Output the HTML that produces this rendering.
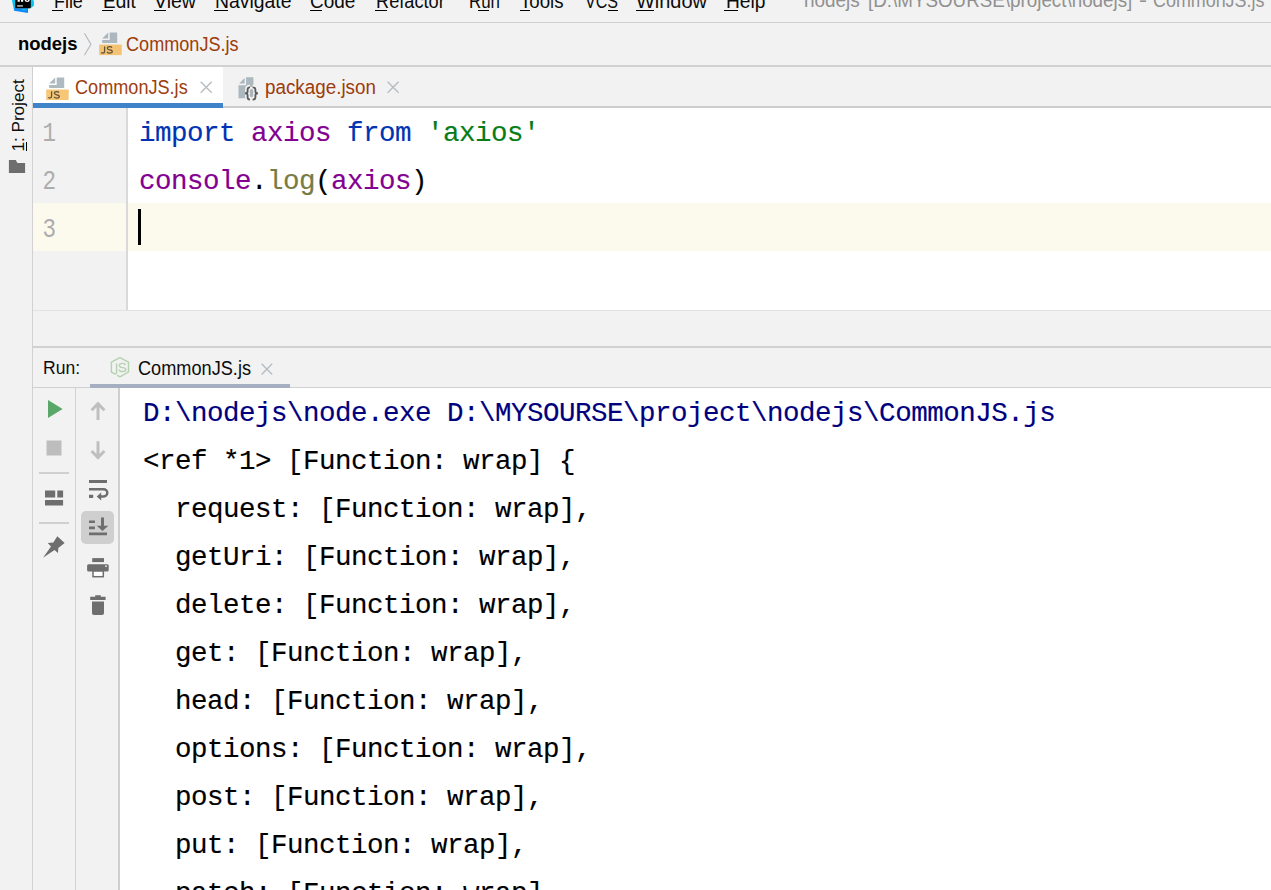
<!DOCTYPE html>
<html><head><meta charset="utf-8"><title>WebStorm</title>
<style>
html,body{margin:0;padding:0;}
body{width:1271px;height:890px;overflow:hidden;background:#f2f2f2;position:relative;font-family:"Liberation Sans",sans-serif;}
.t{position:absolute;white-space:pre;line-height:24px;transform-origin:0 0;opacity:.95;}
.b{position:absolute;}
.m{position:absolute;white-space:pre;font-family:"Liberation Mono",monospace;font-size:27.5px;letter-spacing:-0.5px;line-height:48px;-webkit-text-stroke:0.15px;}
svg{position:absolute;left:0;top:0;overflow:visible;}
</style></head>
<body>
<div class="b" style="left:0px;top:22px;width:1271px;height:1px;background:#d1d1d1;"></div>
<div class="b" style="left:0px;top:65px;width:1271px;height:2px;background:#d1d1d1;"></div>
<div class="b" style="left:32px;top:67px;width:1px;height:823px;background:#d1d1d1;"></div>
<div class="b" style="left:33px;top:67px;width:190px;height:36px;background:#ffffff;"></div>
<div class="b" style="left:33px;top:103px;width:190px;height:5px;background:#4083c9;"></div>
<div class="b" style="left:223px;top:106px;width:1048px;height:2px;background:#cdcdcd;"></div>
<div class="b" style="left:33px;top:108px;width:94px;height:202px;background:#f2f2f2;"></div>
<div class="b" style="left:126px;top:108px;width:2px;height:202px;background:#d9d9d9;"></div>
<div class="b" style="left:128px;top:108px;width:1143px;height:202px;background:#ffffff;"></div>
<div class="b" style="left:33px;top:203px;width:93px;height:48px;background:#fcfaed;"></div>
<div class="b" style="left:128px;top:203px;width:1143px;height:48px;background:#fcfaed;"></div>
<div class="b" style="left:138px;top:209px;width:3px;height:36px;background:#000000;"></div>
<div class="b" style="left:33px;top:310px;width:1238px;height:1px;background:#e2e2e2;"></div>
<div class="b" style="left:33px;top:346px;width:1238px;height:2px;background:#d1d1d1;"></div>
<div class="b" style="left:33px;top:387px;width:1238px;height:1px;background:#d1d1d1;"></div>
<div class="b" style="left:90px;top:384px;width:200px;height:4px;background:#a6afc1;"></div>
<div class="b" style="left:75px;top:388px;width:1px;height:502px;background:#d1d1d1;"></div>
<div class="b" style="left:118px;top:388px;width:2px;height:502px;background:#cfcfcf;"></div>
<div class="b" style="left:120px;top:388px;width:1151px;height:502px;background:#ffffff;"></div>
<div class="b" style="left:39px;top:472px;width:30px;height:2px;background:#d0d0d0;"></div>
<div class="b" style="left:39px;top:522px;width:30px;height:2px;background:#d0d0d0;"></div>
<div class="b" style="left:81px;top:511px;width:33px;height:33px;background:#cfcfcf;border-radius:5px;"></div>
<span class="t" style="left:53.80px;top:-10.86px;font-size:19.5px;color:#000000;transform:scaleX(0.9168);">File</span>
<span class="t" style="left:103.30px;top:-10.86px;font-size:19.5px;color:#000000;transform:scaleX(0.9733);">Edit</span>
<span class="t" style="left:154.00px;top:-10.86px;font-size:19.5px;color:#000000;transform:scaleX(1.0009);">View</span>
<span class="t" style="left:214.50px;top:-10.86px;font-size:19.5px;color:#000000;transform:scaleX(0.9939);">Navigate</span>
<span class="t" style="left:310.00px;top:-10.86px;font-size:19.5px;color:#000000;transform:scaleX(0.9716);">Code</span>
<span class="t" style="left:376.30px;top:-10.86px;font-size:19.5px;color:#000000;transform:scaleX(0.9323);">Refactor</span>
<span class="t" style="left:469.00px;top:-10.86px;font-size:19.5px;color:#000000;transform:scaleX(0.8668);">Run</span>
<span class="t" style="left:519.50px;top:-10.86px;font-size:19.5px;color:#000000;transform:scaleX(0.9558);">Tools</span>
<span class="t" style="left:585.00px;top:-10.86px;font-size:19.5px;color:#000000;transform:scaleX(0.8231);">VCS</span>
<span class="t" style="left:636.00px;top:-10.86px;font-size:19.5px;color:#000000;transform:scaleX(1.0230);">Window</span>
<span class="t" style="left:725.50px;top:-10.86px;font-size:19.5px;color:#000000;transform:scaleX(0.9848);">Help</span>
<div class="b" style="left:52.4px;top:9.5px;width:10.2px;height:1.5px;background:#000000;"></div>
<div class="b" style="left:102.3px;top:9.5px;width:10.3px;height:1.5px;background:#000000;"></div>
<div class="b" style="left:154.2px;top:9.5px;width:12.0px;height:1.5px;background:#000000;"></div>
<div class="b" style="left:213.6px;top:9.5px;width:14.4px;height:1.5px;background:#000000;"></div>
<div class="b" style="left:310.3px;top:9.5px;width:12.0px;height:1.5px;background:#000000;"></div>
<div class="b" style="left:375.4px;top:9.5px;width:12.1px;height:1.5px;background:#000000;"></div>
<div class="b" style="left:478.2px;top:9.5px;width:10.6px;height:1.5px;background:#000000;"></div>
<div class="b" style="left:519.5px;top:9.5px;width:10.1px;height:1.5px;background:#000000;"></div>
<div class="b" style="left:607.9px;top:9.5px;width:10.1px;height:1.5px;background:#000000;"></div>
<div class="b" style="left:636px;top:9.5px;width:17.9px;height:1.5px;background:#000000;"></div>
<div class="b" style="left:724.4px;top:9.5px;width:13.3px;height:1.5px;background:#000000;"></div>
<span class="t" style="left:804.40px;top:-12.06px;font-size:19.5px;color:#8c8c8c;transform:scaleX(0.9693);">nodejs</span>
<span class="t" style="left:867.70px;top:-12.06px;font-size:19.5px;color:#8c8c8c;transform:scaleX(0.9639);">[D:\MYSOURSE\project\nodejs]</span>
<span class="t" style="left:1138.60px;top:-12.06px;font-size:19.5px;color:#8c8c8c;transform:scaleX(1.2320);">-</span>
<span class="t" style="left:1152.80px;top:-12.06px;font-size:19.5px;color:#8c8c8c;transform:scaleX(0.9179);">CommonJS.js</span>
<span class="t" style="left:18.40px;top:32.49px;font-size:18.8px;color:#000000;font-weight:bold;opacity:1;transform:scaleX(0.9820);">nodejs</span>
<span class="t" style="left:125.90px;top:32.24px;font-size:19.5px;color:#993300;transform:scaleX(0.9278);">CommonJS.js</span>
<span class="t" style="left:74.90px;top:74.84px;font-size:19.5px;color:#993300;transform:scaleX(0.9286);">CommonJS.js</span>
<span class="t" style="left:265.30px;top:74.84px;font-size:19.5px;color:#993300;transform:scaleX(0.9651);">package.json</span>
<span class="t" style="left:43.00px;top:355.92px;font-size:19px;color:#000000;transform:scaleX(0.9220);">Run:</span>
<span class="t" style="left:138.20px;top:355.74px;font-size:19.5px;color:#000000;transform:scaleX(0.9311);">CommonJS.js</span>
<div class="m" style="left:139px;top:109.5px;color:#000"><span style="color:#0033b3">import</span> <span style="color:#830091">axios</span> <span style="color:#0033b3">from</span> <span style="color:#067d17">'axios'</span></div>
<div class="m" style="left:139px;top:157.5px;color:#000"><span style="color:#830091">console</span>.<span style="color:#7a7a43">log</span>(<span style="color:#830091">axios</span>)</div>
<div class="m" style="left:40.6px;top:109.5px;color:#adadad;-webkit-text-stroke:0;transform-origin:8.2px 0;transform:scaleX(0.82)">1</div>
<div class="m" style="left:40.6px;top:157.5px;color:#adadad;-webkit-text-stroke:0;transform-origin:8.2px 0;transform:scaleX(0.82)">2</div>
<div class="m" style="left:40.6px;top:205.5px;color:#adadad;-webkit-text-stroke:0;transform-origin:8.2px 0;transform:scaleX(0.82)">3</div>
<div class="m" style="left:143px;top:389.5px;color:#00007f">D:\nodejs\node.exe D:\MYSOURSE\project\nodejs\CommonJS.js</div>
<div class="m" style="left:143px;top:437.5px;color:#000000">&lt;ref *1&gt; [Function: wrap] {</div>
<div class="m" style="left:143px;top:485.5px;color:#000000">  request: [Function: wrap],</div>
<div class="m" style="left:143px;top:533.5px;color:#000000">  getUri: [Function: wrap],</div>
<div class="m" style="left:143px;top:581.5px;color:#000000">  delete: [Function: wrap],</div>
<div class="m" style="left:143px;top:629.5px;color:#000000">  get: [Function: wrap],</div>
<div class="m" style="left:143px;top:677.5px;color:#000000">  head: [Function: wrap],</div>
<div class="m" style="left:143px;top:725.5px;color:#000000">  options: [Function: wrap],</div>
<div class="m" style="left:143px;top:773.5px;color:#000000">  post: [Function: wrap],</div>
<div class="m" style="left:143px;top:821.5px;color:#000000">  put: [Function: wrap],</div>
<div class="m" style="left:143px;top:869.5px;color:#000000">  patch: [Function: wrap],</div>
<span class="t" id="proj" style="left:0;top:0;font-size:17px;color:#000;transform-origin:0 0;transform:translate(6.5px,151.6px) rotate(-90deg) scaleX(1.008);line-height:24px;">1: Project</span>
<div class="b" style="left:25.5px;top:142.2px;width:1.7px;height:8.7px;background:#000000;"></div>
<svg width="1271" height="890" viewBox="0 0 1271 890">
<path fill="#9aa7b0" fill-opacity=".8" d="M108.20,32.60 L102.20,38.60 L108.20,38.60 Z"/>
<path fill="#9aa7b0" fill-opacity=".8" d="M109.70,32.60 L109.70,40.10 L102.20,40.10 L102.20,43.10 L117.20,43.10 L117.20,32.60 Z"/>
<path fill="#f4af3d" fill-opacity=".7" d="M99.20,44.60 L121.70,44.60 L121.70,55.10 L99.20,55.10 Z"/>
<g transform="translate(97.7,31.1)" fill="none" stroke="#231f20" stroke-opacity=".7" stroke-width="1.25"><path d="M6.9,15.3 V20.1 Q6.9,22.0 5.0,22.0 Q4.1,22.0 3.5,21.4"/><path d="M14.3,16.5 Q13.5,15.5 12.0,15.5 Q9.7,15.5 9.7,17.1 Q9.7,18.4 12.0,18.8 Q14.6,19.2 14.6,20.5 Q14.6,22.0 12.1,22.0 Q10.2,22.0 9.3,20.9"/></g>
<path fill="#9aa7b0" fill-opacity=".8" d="M55.20,77.50 L49.20,83.50 L55.20,83.50 Z"/>
<path fill="#9aa7b0" fill-opacity=".8" d="M56.70,77.50 L56.70,85.00 L49.20,85.00 L49.20,88.00 L64.20,88.00 L64.20,77.50 Z"/>
<path fill="#f4af3d" fill-opacity=".7" d="M46.20,89.50 L68.70,89.50 L68.70,100.00 L46.20,100.00 Z"/>
<g transform="translate(44.7,76)" fill="none" stroke="#231f20" stroke-opacity=".7" stroke-width="1.25"><path d="M6.9,15.3 V20.1 Q6.9,22.0 5.0,22.0 Q4.1,22.0 3.5,21.4"/><path d="M14.3,16.5 Q13.5,15.5 12.0,15.5 Q9.7,15.5 9.7,17.1 Q9.7,18.4 12.0,18.8 Q14.6,19.2 14.6,20.5 Q14.6,22.0 12.1,22.0 Q10.2,22.0 9.3,20.9"/></g>
<path d="M84.4,33.2 L90.9,44.2 L84.4,55.2" fill="none" stroke="#b4bcc2" stroke-width="1.2"/>
<path d="M200.7,81.7 L211.7,92.7 M211.7,81.7 L200.7,92.7" stroke="#b6bdc2" stroke-width="1.4" fill="none"/>
<path d="M387.6,81.7 L398.6,92.7 M398.6,81.7 L387.6,92.7" stroke="#b6bdc2" stroke-width="1.4" fill="none"/>
<path d="M261.6,363.8 L272.20000000000005,374.40000000000003 M272.20000000000005,363.8 L261.6,374.40000000000003" stroke="#b6bdc2" stroke-width="1.4" fill="none"/>
<path fill="#9aa7b0" fill-opacity=".8" d="M244.6,77.9 L239.1,83.4 L244.6,83.4 Z"/>
<path fill="#9aa7b0" fill-opacity=".8" d="M246.1,77.3 H253.4 V98.3 H238.5 V85.2 H246.1 Z"/>
<path d="M250.0,87.3 Q247.6,87.3 247.6,89.4 V91.6 Q247.6,93.3 245.0,93.3 Q247.6,93.3 247.6,95.0 V97.4 Q247.6,99.5 250.0,99.5 M252.6,87.3 Q255.4,87.3 255.4,89.4 V91.6 Q255.4,93.3 258.0,93.3 Q255.4,93.3 255.4,95.0 V97.4 Q255.4,99.5 252.6,99.5" fill="none" stroke="#f2f2f2" stroke-width="5"/>
<rect x="247.6" y="87" width="7.8" height="12.6" fill="#f2f2f2"/>
<rect x="249.8" y="88.9" width="3.4" height="8.3" rx="1.6" fill="#aab4bc"/>
<path d="M250.0,87.3 Q247.6,87.3 247.6,89.4 V91.6 Q247.6,93.3 245.0,93.3 Q247.6,93.3 247.6,95.0 V97.4 Q247.6,99.5 250.0,99.5 M252.6,87.3 Q255.4,87.3 255.4,89.4 V91.6 Q255.4,93.3 258.0,93.3 Q255.4,93.3 255.4,95.0 V97.4 Q255.4,99.5 252.6,99.5" fill="none" stroke="#5a5a5a" stroke-width="1.85"/>
<path fill="#6e6e6e" d="M8.9,160.1 H15.8 L17.4,163.1 H25.1 V173.1 H8.9 Z"/>
<path d="M117.2,375.2 L119.9,376.8 L128.5,372 V362.1 L119.9,357.6 L111.4,362.1 V372.2 L114.2,373.6 Q116.6,374.4 116.6,372 V363.4" fill="none" stroke="#b3d2ae" stroke-width="1.4" stroke-linejoin="round"/>
<path d="M125.4,365.2 Q125,363.4 122.4,363.4 Q119.4,363.4 119.4,365.5 Q119.4,367.2 122.4,367.6 Q125.8,368 125.8,369.8 Q125.8,371.6 122.6,371.6 Q119.4,371.6 119,369.6" fill="none" stroke="#b3d2ae" stroke-width="1.4"/>
<path fill="#59a869" d="M48,400 L62.6,409 L48,418 Z"/>
<rect x="46.5" y="440.5" width="15" height="15" fill="#bdbdbd"/>
<path d="M98,420 V404 M91.6,410.2 L98,403.6 L104.4,410.2" fill="none" stroke="#bfbfbf" stroke-width="3"/>
<path d="M98,441.2 V457 M91.6,451 L98,457.6 L104.4,451" fill="none" stroke="#bfbfbf" stroke-width="3"/>
<path fill="#6e6e6e" d="M45,490.5 H55.2 V497.6 H45 Z M57.3,490.5 H63.1 V497.6 H57.3 Z M45,499.9 H63.1 V505.4 H45 Z"/>
<path fill="#6e6e6e" d="M89,480 H107 V483 H89 Z M89,494.8 H93.2 V497.9 H89 Z"/>
<path d="M89,489.2 H103.7 A3.65,3.65 0 0 1 103.7,496.5 H100.5" fill="none" stroke="#6e6e6e" stroke-width="2.4"/>
<path fill="#6e6e6e" d="M96.7,496.4 L101.2,492.4 V500.6 Z"/>
<path fill="#6e6e6e" d="M89,520.4 H94.9 V523.1 H89 Z M89,526.5 H94.9 V529.2 H89 Z M89,532.5 H107 V535.3 H89 Z M101,517.4 H104 V525.7 H108.4 L102.5,530.9 L96.7,525.7 H101 Z"/>
<path fill="#6e6e6e" d="M57.3,536.3 L64.6,543.1 L58.3,548 L58,553 L54.5,550 L43,557.8 L51,546.5 L47.7,543.1 L53.3,542.6 Z"/>
<path fill="#6e6e6e" d="M92.2,558.1 H104 V562.1 H92.2 Z"/>
<rect x="87.1" y="564.2" width="21.6" height="7.2" rx="1.5" fill="#6e6e6e"/>
<rect x="93" y="571" width="10.3" height="5.7" fill="#ffffff" stroke="#6e6e6e" stroke-width="1.5"/>
<circle cx="106" cy="566.2" r="0.9" fill="#f2f2f2"/>
<path fill="#6e6e6e" d="M95.2,595.2 H100.8 V596.8 H105.6 V600 H90.2 V596.8 H95.2 Z M92,601.6 H104 V613 Q104,614.9 102.1,614.9 H93.9 Q92,614.9 92,613 Z"/>
<path fill="#07c3f2" d="M11.9,0 H33.2 L33.9,1.2 V5.7 L30.8,7.9 V8.3 H15.2 L14.1,10.7 Z"/>
<path fill="#0f86f8" d="M14.1,8.3 H28 V12.9 L14.1,10.7 Z"/>
<ellipse cx="24.2" cy="9.5" rx="2.6" ry="1.1" fill="#07c3f2" fill-opacity=".85"/>
<path fill="#000" d="M15.2,0 H30.8 V7.3 Q30.8,8.3 29.8,8.3 H15.2 Z"/>
<rect x="17.1" y="5" width="5.8" height="1.8" fill="#9c9c9c"/>
<path fill="#fff" d="M17.6,0 H19.8 V1.7 H17.6 Z M21,0 H23.2 V1.7 H21 Z M24.6,0 Q24.8,1.9 27.2,1.9 Q29.6,1.9 29.8,0 H28 Q27.9,0.9 27.2,0.9 Q26.5,0.9 26.4,0 Z"/>
</svg>
</body></html>
